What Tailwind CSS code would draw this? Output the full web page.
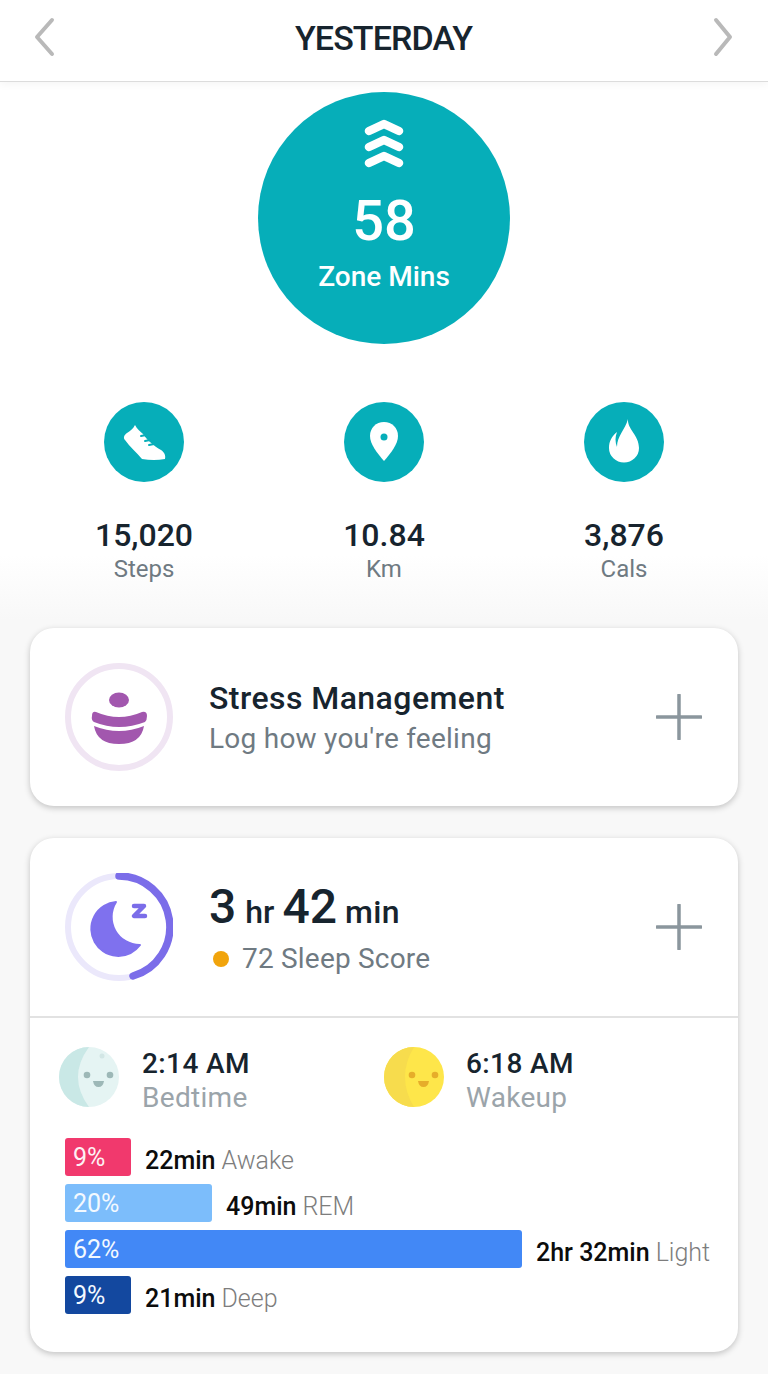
<!DOCTYPE html>
<html>
<head>
<meta charset="utf-8">
<script src="https://cdn.jsdelivr.net/npm/@tailwindcss/browser@4"></script>
</head>
<body class="font-['Roboto',sans-serif]">
<div class="w-[768px] h-[1374px] overflow-hidden bg-[linear-gradient(#ffffff_555px,#f8f8f8_620px)]">
  <header class="h-[82px] bg-white border-b border-[#dcdcdc] shadow-[0_3px_8px_rgba(0,0,0,0.04)] flex items-center justify-between pl-[33px] pr-[34px]">
    <svg class="w-[24px] h-[42px] -mt-[8px]" viewBox="0 0 24 42" fill="none" stroke="#b9b9b9" stroke-width="4" stroke-linecap="round" stroke-linejoin="round"><path d="M19 4 L4 21 L19 38"/></svg>
    <h1 class="text-[34px] tracking-[-0.9px] leading-[40px] font-medium text-[#17242e] -mt-[6px]">YESTERDAY</h1>
    <svg class="w-[24px] h-[42px] -mt-[8px]" viewBox="0 0 24 42" fill="none" stroke="#b9b9b9" stroke-width="4" stroke-linecap="round" stroke-linejoin="round"><path d="M6 4 L20 21 L6 38"/></svg>
  </header>

  <section class="mt-[10px] mx-auto w-[252px] h-[252px] rounded-full bg-[#06aeb9] flex flex-col items-center text-white">
    <svg class="mt-[26px] w-[40px] h-[50px]" viewBox="0 0 40 50" fill="none" stroke="#ffffff" stroke-width="8.5" stroke-linecap="round" stroke-linejoin="round"><path d="M5 13 L20 6 L35 13"/><path d="M5 29 L20 22 L35 29"/><path d="M5 45 L20 38 L35 45"/></svg>
    <div class="mt-[21px] text-[56px] leading-[64px] font-medium">58</div>
    <div class="mt-[6px] text-[28px] leading-[36px] font-medium">Zone Mins</div>
  </section>

  <section class="mt-[58px] px-[24px] grid grid-cols-3 text-center">
    <div class="flex flex-col items-center">
      <div class="w-[80px] h-[80px] rounded-full bg-[#06aeb9]">
        <svg class="w-[80px] h-[80px]" viewBox="0 0 80 80"><path d="M31 23 C33 27 36 29 39 32 C43 38 50 44 57 48 C60 50 62 53 61 57 Q50 59 38 57 C32 50 26 45 21 38 C19 36 20 33 23 31 C26 29 29 27 31 23 Z" fill="#ffffff"/><path d="M37 34 L42 33 M41 39 L46 38 M45 43 L50 42" stroke="#06aeb9" stroke-width="2" stroke-linecap="round"/></svg>
      </div>
      <div class="mt-[35px] text-[32px] leading-[36px] font-medium text-[#17242e]">15,020</div>
      <div class="mt-[1px] text-[24px] leading-[30px] text-[#6f7a82]">Steps</div>
    </div>
    <div class="flex flex-col items-center">
      <div class="w-[80px] h-[80px] rounded-full bg-[#06aeb9]">
        <svg class="w-[80px] h-[80px]" viewBox="0 0 80 80"><path d="M40 20 C48 20 54 26 54 34 C54 42 47 51 40 59 C33 51 26 42 26 34 C26 26 32 20 40 20 Z" fill="#ffffff"/><circle cx="40" cy="35" r="3.5" fill="#06aeb9"/></svg>
      </div>
      <div class="mt-[35px] text-[32px] leading-[36px] font-medium text-[#17242e]">10.84</div>
      <div class="mt-[1px] text-[24px] leading-[30px] text-[#6f7a82]">Km</div>
    </div>
    <div class="flex flex-col items-center">
      <div class="w-[80px] h-[80px] rounded-full bg-[#06aeb9]">
        <svg class="w-[80px] h-[80px]" viewBox="0 0 80 80"><path d="M44 17 C43 27 55 33 55 46 A15 14.500 0 0 1 25 46 C25 39 28 34 33 30 C31 35 31 40 33 45 C33 34 41 28 44 17 Z" fill="#ffffff"/></svg>
      </div>
      <div class="mt-[35px] text-[32px] leading-[36px] font-medium text-[#17242e]">3,876</div>
      <div class="mt-[1px] text-[24px] leading-[30px] text-[#6f7a82]">Cals</div>
    </div>
  </section>

  <section class="mt-[44px] mx-[30px] h-[178px] bg-white rounded-[24px] shadow-[0_2px_6px_rgba(0,0,0,0.22)] flex items-center pl-[35px] pr-[36px]">
    <svg class="w-[108px] h-[108px] shrink-0" viewBox="0 0 108 108"><circle cx="54" cy="54" r="51" fill="none" stroke="#f0e5f3" stroke-width="6"/><ellipse cx="54" cy="37" rx="10" ry="7.5" fill="#a257ae"/><path d="M31 49 Q54 59 77 49 Q82 48 82 53 Q82 57 80 59 Q54 69 29 59 Q26 57 27 53 Q27 48 31 49 Z" fill="#a257ae"/><path d="M29 63 Q54 73 79 63 Q76 81 54 81 Q32 81 29 63 Z" fill="#a257ae"/></svg>
    <div class="ml-[36px] flex-1">
      <div class="text-[32px] tracking-[0.45px] leading-[40px] font-medium text-[#17242e]">Stress Management</div>
      <div class="mt-[3px] text-[28px] tracking-[0.25px] leading-[36px] text-[#6f7a82]">Log how you're feeling</div>
    </div>
    <svg class="w-[46px] h-[46px] shrink-0" viewBox="0 0 46 46" stroke="#8b969d" stroke-width="3.5" stroke-linecap="round"><path d="M23 1 V45 M1 23 H45"/></svg>
  </section>

  <section class="mt-[32px] mx-[30px] h-[514px] bg-white rounded-[24px] shadow-[0_2px_6px_rgba(0,0,0,0.22)]">
    <div class="h-[180px] border-b-2 border-[#e2e2e2] flex items-center pl-[35px] pr-[36px]">
      <svg class="w-[108px] h-[108px] shrink-0" viewBox="0 0 108 108" fill="none"><circle cx="54" cy="54" r="51" stroke="#ebe8fb" stroke-width="6"/><path d="M54 3 A51 51 0 0 1 68 103" stroke="#7b6de9" stroke-width="7.5" stroke-linecap="round"/><path d="M51 29 A27 27 0 1 0 75 72 A28 28 0 0 1 51 29 Z" fill="#7f71ee" stroke="#7f71ee" stroke-width="2" stroke-linejoin="round"/><path d="M69 33 H79 L69 43 H80" stroke="#7b6de9" stroke-width="4.5" stroke-linejoin="round" stroke-linecap="round"/></svg>
      <div class="ml-[36px] flex-1 mt-[2px]">
        <div class="flex items-baseline h-[56px] leading-[56px] font-medium text-[#17242e]"><span class="text-[48px]">3</span><span class="text-[32px] ml-[9px]">hr</span><span class="text-[48px] ml-[8px]">42</span><span class="text-[32px] tracking-[0.4px] ml-[8px]">min</span></div>
        <div class="mt-[6px] flex items-center text-[28px] tracking-[0.2px] leading-[36px] text-[#6f7a82]"><span class="ml-[4px] w-[16px] h-[16px] rounded-full bg-[#f1a40c]"></span><span class="ml-[13px]">72 Sleep Score</span></div>
      </div>
      <svg class="w-[46px] h-[46px] shrink-0" viewBox="0 0 46 46" stroke="#8b969d" stroke-width="3.5" stroke-linecap="round"><path d="M23 1 V45 M1 23 H45"/></svg>
    </div>

    <div class="mt-[29px] flex pl-[29px]">
      <div class="w-[325px] flex items-center">
        <svg class="w-[60px] h-[60px] shrink-0 -mt-[8px]" viewBox="0 0 60 60"><circle cx="30" cy="30" r="30" fill="#e5f4f3"/><path d="M30 0 A30 30 0 0 0 30 60 Q8 30 30 0 Z" fill="#c9e8e6"/><circle cx="43" cy="9" r="2.500" fill="#d2e6e5"/><circle cx="28" cy="28" r="3.300" fill="#9db8b7"/><circle cx="51" cy="28" r="3.300" fill="#9db8b7"/><path d="M34 34 H45 Q44 40 39.500 40 Q35 40 34 34 Z" fill="#9db8b7"/></svg>
        <div class="ml-[23px]">
          <div class="text-[28px] tracking-[0.4px] leading-[34px] font-medium text-[#17242e]">2:14 AM</div>
          <div class="text-[28px] tracking-[0.3px] leading-[34px] text-[#9ba4aa]">Bedtime</div>
        </div>
      </div>
      <div class="flex items-center">
        <svg class="w-[60px] h-[60px] shrink-0 -mt-[8px]" viewBox="0 0 60 60"><circle cx="30" cy="30" r="30" fill="#fee64a"/><path d="M30 0 A30 30 0 0 0 30 60 Q12 30 30 0 Z" fill="#f7dc4d"/><circle cx="28" cy="28" r="3.300" fill="#e6ad2a"/><circle cx="51" cy="28" r="3.300" fill="#e6ad2a"/><path d="M34 34 H45 Q44 40 39.500 40 Q35 40 34 34 Z" fill="#e6ad2a"/></svg>
        <div class="ml-[22px]">
          <div class="text-[28px] tracking-[0.4px] leading-[34px] font-medium text-[#17242e]">6:18 AM</div>
          <div class="text-[28px] tracking-[0.3px] leading-[34px] text-[#9ba4aa]">Wakeup</div>
        </div>
      </div>
    </div>

    <div class="mt-[23px] ml-[35px] flex flex-col gap-[8px] text-[25px] leading-[38px]">
      <div class="flex items-center h-[38px]"><div class="w-[66px] h-[38px] rounded-[3px] bg-[#f1396d] text-[#fdf1f4] pl-[8px] leading-[40px]">9%</div><span class="ml-[14px] mt-[7px] font-medium text-[#0c0c0c]">22min</span><span class="ml-[6px] mt-[7px] font-light text-[#7d7d7d]">Awake</span></div>
      <div class="flex items-center h-[38px]"><div class="w-[147px] h-[38px] rounded-[3px] bg-[#7cbdfb] text-[#f3f9ff] pl-[8px] leading-[40px]">20%</div><span class="ml-[14px] mt-[7px] font-medium text-[#0c0c0c]">49min</span><span class="ml-[6px] mt-[7px] font-light text-[#7d7d7d]">REM</span></div>
      <div class="flex items-center h-[38px]"><div class="w-[457px] h-[38px] rounded-[3px] bg-[#4288f6] text-[#f3f9ff] pl-[8px] leading-[40px]">62%</div><span class="ml-[14px] mt-[7px] font-medium text-[#0c0c0c]">2hr 32min</span><span class="ml-[6px] mt-[7px] font-light text-[#7d7d7d]">Light</span></div>
      <div class="flex items-center h-[38px]"><div class="w-[66px] h-[38px] rounded-[3px] bg-[#13489f] text-[#f3f9ff] pl-[8px] leading-[40px]">9%</div><span class="ml-[14px] mt-[7px] font-medium text-[#0c0c0c]">21min</span><span class="ml-[6px] mt-[7px] font-light text-[#7d7d7d]">Deep</span></div>
    </div>
  </section>
</div>
</body>
</html>
